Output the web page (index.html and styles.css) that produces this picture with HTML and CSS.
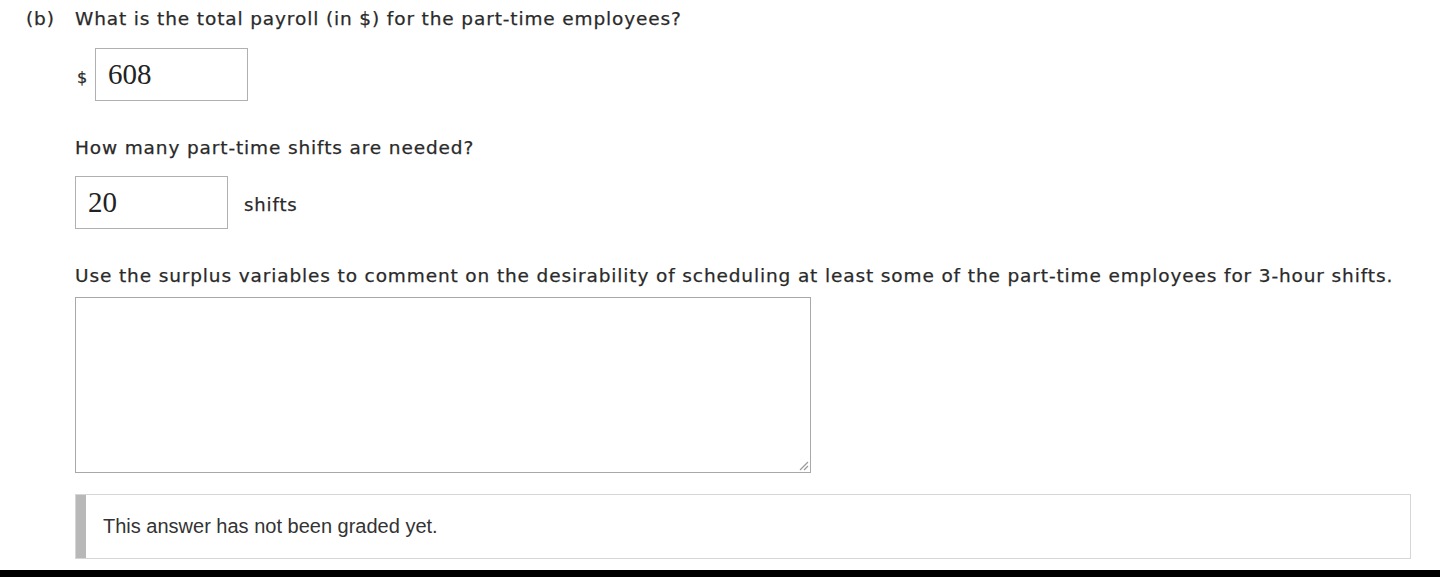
FILE: index.html
```html
<!DOCTYPE html>
<html>
<head>
<meta charset="utf-8">
<link rel="stylesheet" href="styles.css">
</head>
<body>
<div class="page">
  <div class="question">
    <div class="label">(b)</div>
    <div class="body">
      <p class="prompt first">What is the total payroll (in $) for the part-time employees?</p>
      <div class="answer-row dollar-row">
        <span class="unit-pre">$</span>
        <div class="box">608</div>
      </div>
      <p class="prompt">How many part-time shifts are needed?</p>
      <div class="answer-row shifts-row">
        <div class="box">20</div>
        <span class="unit-post">shifts</span>
      </div>
      <p class="prompt">Use the surplus variables to comment on the desirability of scheduling at least some of the part-time employees for 3-hour shifts.</p>
      <div class="textarea">
        <svg class="grip" width="12" height="12" viewBox="0 0 12 12"><path d="M11 3 L3 11 M11 7 L7 11" stroke="#9a9a9a" stroke-width="1.2" fill="none"/></svg>
      </div>
      <div class="graded">
        <div class="bar"></div>
        <div class="graded-text">This answer has not been graded yet.</div>
      </div>
    </div>
  </div>
</div>
<div class="footer"></div>
</body>
</html>
```
FILE: styles.css
```css
html, body {
  margin: 0;
  padding: 0;
  background: #fff;
}
body {
  width: 1440px;
  height: 577px;
  overflow: hidden;
  display: flex;
  flex-direction: column;
  font-family: "DejaVu Sans", Verdana, sans-serif;
  color: #2a2a2a;
}
.page {
  flex: 1;
}
.question {
  display: flex;
  padding-top: 8px;
}
.label {
  width: 49px;
  padding-left: 26px;
  font-size: 18.5px;
  line-height: 22px;
  letter-spacing: 0.9px;
  -webkit-text-stroke: 0.25px #2a2a2a;
}
.body {
  flex: 1;
}
.prompt {
  margin: 0;
  font-size: 18.5px;
  line-height: 22px;
  letter-spacing: 0.87px;
  white-space: nowrap;
  -webkit-text-stroke: 0.25px #2a2a2a;
}
.answer-row {
  display: flex;
  align-items: center;
}
.dollar-row {
  margin-top: 18px;
  margin-bottom: 36px;
}
.shifts-row {
  margin-top: 17px;
  margin-bottom: 36px;
}
.unit-pre {
  font-size: 16px;
  width: 20px;
  padding-left: 2px;
  box-sizing: border-box;
  margin-top: 6px;
  -webkit-text-stroke: 0.25px #2a2a2a;
}
.unit-post {
  font-size: 18px;
  letter-spacing: 0.9px;
  margin-left: 16px;
  margin-top: 4px;
  -webkit-text-stroke: 0.25px #2a2a2a;
}
.box {
  width: 153px;
  height: 53px;
  box-sizing: border-box;
  border: 1px solid #b0b0b0;
  font-family: "Liberation Serif", "Times New Roman", serif;
  font-size: 29px;
  color: #222;
  padding-left: 12px;
  display: flex;
  align-items: center;
}
.textarea {
  position: relative;
  width: 736px;
  height: 176px;
  box-sizing: border-box;
  border: 1px solid #a8a8a8;
  margin-top: 10px;
}
.grip {
  position: absolute;
  right: 1px;
  bottom: 1px;
}
.graded {
  margin-top: 21px;
  width: 1336px;
  height: 65px;
  box-sizing: border-box;
  border: 1px solid #d6d6d6;
  display: flex;
  align-items: stretch;
}
.bar {
  width: 10px;
  background: #b8b8b8;
}
.graded-text {
  font-family: "Liberation Sans", Arial, sans-serif;
  font-size: 20px;
  color: #333;
  padding-left: 17px;
  display: flex;
  align-items: center;
}
.footer {
  height: 7px;
  background: #000;
}
```
